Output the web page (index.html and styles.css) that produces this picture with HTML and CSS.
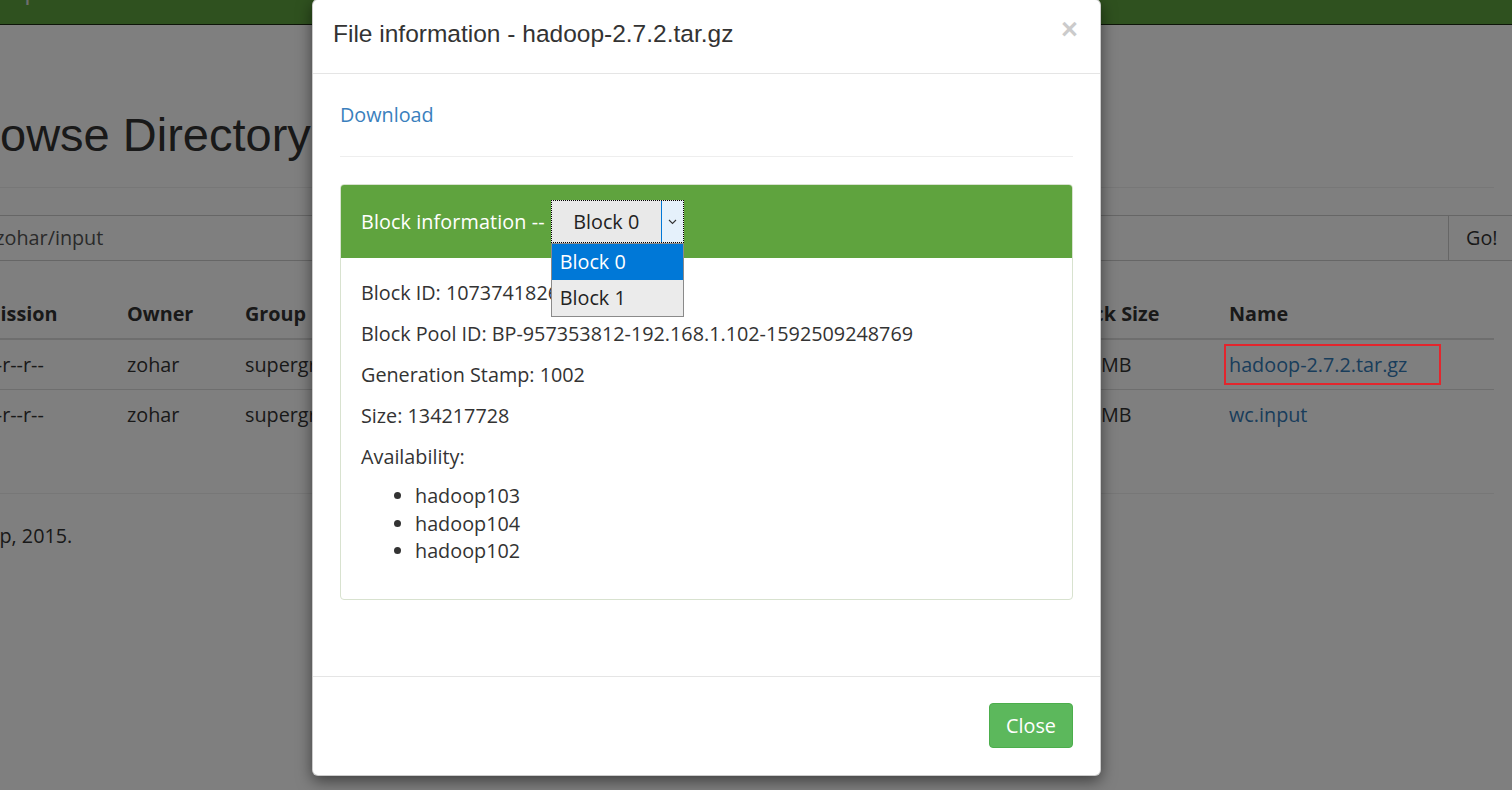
FILE: index.html
```html
<!DOCTYPE html>
<html lang="en">
<head>
<meta charset="utf-8">
<title>Browsing HDFS</title>
<link rel="stylesheet" href="styles.css">
</head>
<body>
<div class="page">
  <nav class="navbar"><span class="brand">Hadoop</span></nav>
  <main class="container">
    <div class="page-header"><h1>Browse Directory</h1></div>
    <div class="input-group">
      <div class="form-control">/user/zohar/input</div>
      <div class="btn-go">Go!</div>
    </div>
    <table class="table">
      <colgroup>
        <col class="c-perm"><col class="c-owner"><col class="c-group"><col class="c-size">
        <col class="c-mod"><col class="c-repl"><col class="c-block"><col class="c-name">
      </colgroup>
      <thead>
        <tr><th>Permission</th><th>Owner</th><th>Group</th><th>Size</th><th>Last Modified</th><th>Replication</th><th>Block Size</th><th>Name</th></tr>
      </thead>
      <tbody>
        <tr><td>-rw-r--r--</td><td>zohar</td><td>supergroup</td><td>188.5 MB</td><td>2020/6/19</td><td>3</td><td>128 MB</td><td><a class="link">hadoop-2.7.2.tar.gz</a></td></tr>
        <tr><td>-rw-r--r--</td><td>zohar</td><td>supergroup</td><td>52 B</td><td>2020/6/19</td><td>3</td><td>128 MB</td><td><a class="link">wc.input</a></td></tr>
      </tbody>
    </table>
    <hr class="page-hr">
    <p class="footer-text">Hadoop, 2015.</p>
  </main>
</div>
<div class="backdrop"></div>
<div class="annotation"></div>
<div class="modal">
  <div class="modal-header">
    <h4 class="modal-title">File information - hadoop-2.7.2.tar.gz</h4>
    <span class="close">×</span>
  </div>
  <div class="modal-body">
    <p class="dl"><a class="dl-link">Download</a></p>
    <hr class="body-hr">
    <div class="panel">
      <div class="panel-heading">
        <span class="ph-label">Block information --</span>
        <div class="select">
          <div class="select-value">Block 0</div>
          <div class="select-arrow"><svg width="9" height="6" viewBox="0 0 9 6"><polyline points="1,1 4.5,4.5 8,1" fill="none" stroke="#333" stroke-width="1.1"/></svg></div>
          <div class="select-list">
            <div class="opt opt-active">Block 0</div>
            <div class="opt">Block 1</div>
          </div>
        </div>
      </div>
      <div class="panel-body">
        <p>Block ID: 1073741826</p>
        <p>Block Pool ID: BP-957353812-192.168.1.102-1592509248769</p>
        <p>Generation Stamp: 1002</p>
        <p>Size: 134217728</p>
        <p>Availability:</p>
        <ul>
          <li>hadoop103</li>
          <li>hadoop104</li>
          <li>hadoop102</li>
        </ul>
      </div>
    </div>
  </div>
  <div class="modal-footer">
    <button class="btn-close">Close</button>
  </div>
</div>
</body>
</html>
```

FILE: styles.css
```css
html, body {
  margin: 0;
  padding: 0;
}
body {
  width: 1512px;
  height: 790px;
  overflow: hidden;
  position: relative;
  background: #fff;
  font-family: "Open Sans", "Noto Sans", sans-serif;
  font-size: 19.8px;
  color: #333;
}

/* ---------- background page ---------- */
.navbar {
  height: 24px;
  background: #5fa33e;
  border-bottom: 1px solid #1a2a10;
  position: relative;
  overflow: hidden;
}
.brand {
  position: absolute;
  left: -46px;
  top: -22px;
  font-family: "Liberation Sans", sans-serif;
  font-size: 24px;
  color: #ddd;
}
.container {
  margin-left: -62px;
  width: 1556px;
}
.page-header {
  margin-top: 84px;
  padding-bottom: 26px;
  border-bottom: 1px solid #eee;
}
.page-header h1 {
  margin: 0 0 0 15px;
  font-family: "Liberation Sans", Arial, sans-serif;
  font-weight: 400;
  font-size: 47px;
  line-height: 52px;
  color: #333;
}
.input-group {
  display: flex;
  margin-top: 27px;
  margin-left: -15px;
  height: 46px;
  width: 1620px;
}
.form-control {
  width: 1526px;
  box-sizing: border-box;
  border: 1px solid #ccc;
  padding: 0 16px;
  line-height: 44px;
  color: #555;
}
.btn-go {
  flex: 1;
  box-sizing: border-box;
  border: 1px solid #ccc;
  border-left: 0;
  padding-left: 17px;
  line-height: 44px;
  color: #333;
}
.table {
  margin-top: 29px;
  width: 1556px;
  table-layout: fixed;
  border-collapse: collapse;
}
.c-perm { width: 179px; }
.c-owner { width: 118px; }
.c-group { width: 165px; }
.c-size { width: 200px; }
.c-mod { width: 250px; }
.c-repl { width: 202px; }
.c-block { width: 167px; }
.c-name { width: 275px; }
.table th, .table td {
  text-align: left;
  padding: 10px 10px;
  line-height: 28px;
  white-space: nowrap;
  overflow: hidden;
}
.table td {
  line-height: 29px;
  border-top: 1px solid #ddd;
}
.table td:first-child {
  padding-left: 28px;
}
.table th {
  font-weight: 700;
  border-bottom: 2px solid #ddd;
}
.link {
  color: #337ab7;
}
.page-hr {
  margin: 54px 0 0 0;
  border: 0;
  border-top: 1px solid #eee;
}
.footer-text {
  margin: 28px 0 0 0;
  line-height: 28px;
}

/* ---------- overlay ---------- */
.backdrop {
  position: absolute;
  inset: 0;
  background: rgba(0, 0, 0, 0.5);
}
.annotation {
  position: absolute;
  left: 1224px;
  top: 344px;
  width: 217px;
  height: 41px;
  box-sizing: border-box;
  border: 2px solid #e3262d;
}

/* ---------- modal ---------- */
.modal {
  position: absolute;
  left: 312px;
  top: -1px;
  width: 789px;
  box-sizing: border-box;
  background: #fff;
  border: 1px solid rgba(0, 0, 0, 0.2);
  border-radius: 6px;
  box-shadow: 0 5px 15px rgba(0, 0, 0, 0.5);
}
.modal-header {
  height: 74px;
  box-sizing: border-box;
  border-bottom: 1px solid #e5e5e5;
  padding: 19px 22px 0 20px;
  display: flex;
  align-items: flex-start;
  justify-content: space-between;
}
.modal-title {
  margin: 0;
  font-family: "Liberation Sans", Arial, sans-serif;
  font-weight: 400;
  font-size: 24.5px;
  line-height: 30px;
  color: #333;
}
.close {
  font-family: "Liberation Sans", Arial, sans-serif;
  font-weight: 700;
  font-size: 29px;
  line-height: 30px;
  color: #000;
  opacity: 0.2;
  margin-top: -5px;
}
.modal-body {
  padding: 28px 27px 76px 27px;
}
.dl {
  margin: 0;
  line-height: 26px;
}
.dl-link {
  color: #3a7fbd;
}
.body-hr {
  margin: 28px 0 27px 0;
  border: 0;
  border-top: 1px solid #eee;
}
.panel {
  border: 1px solid #d8e2cf;
  border-radius: 4px;
}
.panel-heading {
  background: #5fa33e;
  color: #fff;
  padding: 15px 20px;
  display: flex;
  align-items: center;
  gap: 6px;
  border-radius: 3px 3px 0 0;
}
.ph-label {
  line-height: 26px;
  letter-spacing: 0.1px;
}
.select {
  position: relative;
  width: 133px;
  height: 43px;
  box-sizing: border-box;
  border: 1px dotted #000;
  display: flex;
  background: #e9e9e9;
  color: #222;
}
.select-value {
  flex: 1;
  text-align: center;
  line-height: 41px;
}
.select-arrow {
  width: 22px;
  box-sizing: border-box;
  border-left: 1px solid #0078d7;
  background: #e5f1fb;
  display: flex;
  align-items: center;
  justify-content: center;
}
.select-list {
  position: absolute;
  left: -1px;
  top: 42px;
  width: 133px;
  box-sizing: border-box;
  border: 1px solid #8a8a8a;
  background: #ebebeb;
}
.opt {
  height: 36px;
  line-height: 36px;
  padding-left: 8px;
  color: #222;
}
.opt-active {
  background: #0078d7;
  color: #fff;
}
.panel-body {
  padding: 21px 20px 21px 20px;
}
.panel-body p {
  margin: 0 0 14px 0;
  line-height: 27px;
}
.panel-body ul {
  margin: -2px 0 13px 0;
  padding-left: 54px;
}
.panel-body li {
  line-height: 27.5px;
}
.modal-footer {
  border-top: 1px solid #e5e5e5;
  padding: 26px 27px 27px 27px;
  display: flex;
  justify-content: flex-end;
}
.btn-close {
  width: 84px;
  height: 45px;
  background: #5cb85c;
  border: 1px solid #4cae4c;
  border-radius: 4px;
  color: #fff;
  font-family: "Open Sans", "Noto Sans", sans-serif;
  font-size: 19.8px;
  padding: 0;
}
```
